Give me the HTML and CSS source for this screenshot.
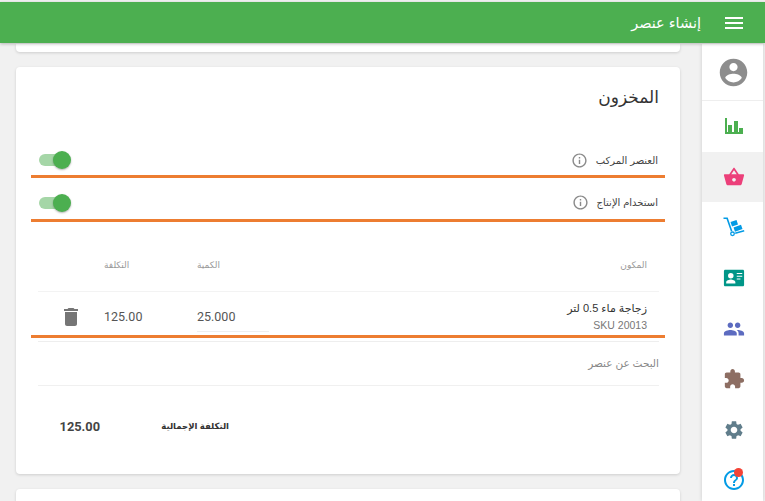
FILE: index.html
```html
<!DOCTYPE html>
<html lang="ar" dir="rtl">
<head>
    <meta charset="UTF-8">
    <meta name="viewport" content="width=device-width, initial-scale=1.0">
    <title>إنشاء عنصر</title>
    <link rel="stylesheet" href="styles.css">
</head>
<body>

<header class="topbar">
    <svg class="menu-icon" viewBox="0 0 24 24"><path d="M3 18h18v-2H3v2zm0-5h18v-2H3v2zm0-7v2h18V6H3z"/></svg>
    <span class="topbar-title">إنشاء عنصر</span>
</header>

<div class="layout">
    <nav class="sidebar">
        <a class="nav-avatar">
            <svg viewBox="0 0 24 24" fill="#8d8d8d"><path d="M12 2C6.48 2 2 6.48 2 12s4.48 10 10 10 10-4.48 10-10S17.52 2 12 2zm0 3c1.66 0 3 1.34 3 3s-1.34 3-3 3-3-1.34-3-3 1.34-3 3-3zm0 14.2c-2.5 0-4.71-1.28-6-3.22.03-1.99 4-3.08 6-3.08 1.99 0 5.97 1.09 6 3.08-1.29 1.94-3.5 3.22-6 3.22z"/></svg>
        </a>
        <a class="nav-item">
            <svg class="chart-icon" viewBox="0 0 18 16" fill="#4caf50"><path d="M0 0h2v14h16v2H0zM3 7h4v7H3zM9 3h4v11H9zM14 10h4v4h-4z"/></svg>
        </a>
        <a class="nav-item active">
            <svg viewBox="0 0 24 24" fill="#ec407a"><path d="M17.21 9l-4.38-6.56c-.19-.28-.51-.42-.83-.42-.32 0-.64.14-.83.43L6.79 9H2c-.55 0-1 .45-1 1 0 .09.01.18.04.27l2.54 9.27c.23.84 1 1.46 1.92 1.46h13c.92 0 1.69-.62 1.93-1.46l2.54-9.27L23 10c0-.55-.45-1-1-1h-4.790zM9 9l3-4.400L15 9H9zm3 8c-1.100 0-2-.9-2-2s.9-2 2-2 2 .9 2 2-.9 2-2 2z"/></svg>
        </a>
        <a class="nav-item">
            <svg viewBox="0 0 22 20" fill="#039be5"><path d="M.5.5h4.200l4.700 13.600-1.500.5L3.500 2H.5zM12 15.500l9-2.500.4 1.400-9 2.500zM7.500 5l6-2 1.500 4.500-6 2zM10.500 10.500l7.500-2.700 1.500 4.200-7.500 2.700z"/><circle cx="9.500" cy="16.800" r="1.800" fill="none" stroke="#039be5" stroke-width="1.300"/></svg>
        </a>
        <a class="nav-item">
            <svg viewBox="0 0 24 24" fill="#009688"><path d="M2.500 3h19c.9 0 1.500.6 1.500 1.500v15c0 .9-.6 1.500-1.500 1.500h-19c-.9 0-1.500-.6-1.500-1.500v-15C1 3.600 1.600 3 2.500 3zM8.500 6.500a3 3 0 1 0 0 6 3 3 0 0 0 0-6zM3.500 18h10v-1.500c0-2-3.300-3-5-3s-5 1-5 3zM15 6.500v1.200h6V6.500zM15 9.500v1.200h6V9.500zM15 12.500v1.200h4v-1.200z"/></svg>
        </a>
        <a class="nav-item">
            <svg viewBox="0 0 24 24" fill="#5c6bc0"><path d="M16 11c1.660 0 2.990-1.340 2.990-3S17.660 5 16 5c-1.660 0-3 1.340-3 3s1.340 3 3 3zm-8 0c1.660 0 2.990-1.340 2.990-3S9.660 5 8 5C6.340 5 5 6.340 5 8s1.340 3 3 3zm0 2c-2.330 0-7 1.170-7 3.500V19h14v-2.500c0-2.330-4.670-3.500-7-3.500zm8 0c-.29 0-.62.02-.97.05 1.160.84 1.970 1.970 1.970 3.450V19h6v-2.500c0-2.330-4.670-3.500-7-3.500z"/></svg>
        </a>
        <a class="nav-item">
            <svg viewBox="0 0 24 24" fill="#8d6e63"><path d="M20.500 11H19V7c0-1.100-.9-2-2-2h-4V3.500C13 2.120 11.880 1 10.500 1S8 2.120 8 3.500V5H4c-1.100 0-1.990.9-1.990 2v3.800H3.500c1.490 0 2.700 1.210 2.700 2.700s-1.210 2.700-2.700 2.700H2V20c0 1.100.9 2 2 2h3.800v-1.500c0-1.490 1.210-2.700 2.700-2.700 1.490 0 2.700 1.210 2.700 2.700V22H17c1.100 0 2-.9 2-2v-4h1.500c1.380 0 2.500-1.120 2.500-2.500S21.880 11 20.500 11z"/></svg>
        </a>
        <a class="nav-item">
            <svg viewBox="0 0 24 24" fill="#607d8b"><path d="M19.140 12.940c.04-.3.06-.61.06-.94 0-.32-.02-.64-.07-.94l2.030-1.580c.18-.14.23-.41.12-.61l-1.920-3.320c-.12-.22-.37-.29-.59-.22l-2.390.96c-.5-.38-1.030-.7-1.620-.94l-.36-2.540c-.04-.24-.24-.41-.48-.41h-3.840c-.24 0-.43.17-.47.41l-.36 2.540c-.59.24-1.130.57-1.620.94l-2.390-.96c-.22-.08-.47 0-.59.22L2.740 8.870c-.12.21-.08.47.12.61l2.030 1.580c-.05.3-.09.63-.09.94s.02.64.07.94l-2.030 1.580c-.18.14-.23.41-.12.61l1.920 3.320c.12.22.37.29.59.22l2.390-.96c.5.38 1.030.7 1.620.94l.36 2.540c.05.24.24.41.48.41h3.840c.24 0 .44-.17.47-.41l.36-2.540c.59-.24 1.130-.56 1.620-.94l2.390.96c.22.08.47 0 .59-.22l1.920-3.320c.12-.22.07-.47-.12-.61l-2.010-1.580zM12 15.600c-1.980 0-3.600-1.620-3.600-3.600s1.620-3.600 3.600-3.600 3.600 1.620 3.600 3.600-1.620 3.600-3.600 3.600z"/></svg>
        </a>
        <a class="nav-item nav-help">
            <svg viewBox="0 0 24 24" fill="#039be5"><path d="M11 18h2v-2h-2v2zm1-16C6.480 2 2 6.480 2 12s4.480 10 10 10 10-4.480 10-10S17.520 2 12 2zm0 18c-4.410 0-8-3.590-8-8s3.590-8 8-8 8 3.590 8 8-3.590 8-8 8zm0-14c-2.210 0-4 1.790-4 4h2c0-1.100.9-2 2-2s2 .9 2 2c0 2-3 1.750-3 5h2c0-2.250 3-2.500 3-5 0-2.210-1.790-4-4-4z"/></svg>
            <span class="help-dot"></span>
        </a>
    </nav>

    <main class="content">
        <div class="card card-prev"></div>

        <section class="card card-stock">
            <h2 class="card-title">المخزون</h2>

            <div class="switch-row switch-first">
                <span class="switch-label">العنصر المركب</span>
                <svg class="info-icon" viewBox="0 0 24 24"><path d="M11 7h2v2h-2zm0 4h2v6h-2zm1-9C6.480 2 2 6.480 2 12s4.480 10 10 10 10-4.480 10-10S17.520 2 12 2zm0 18c-4.410 0-8-3.590-8-8s3.590-8 8-8 8 3.590 8 8-3.590 8-8 8z"/></svg>
                <span class="toggle"></span>
            </div>
            <div class="switch-row">
                <span class="switch-label">استخدام الإنتاج</span>
                <svg class="info-icon" viewBox="0 0 24 24"><path d="M11 7h2v2h-2zm0 4h2v6h-2zm1-9C6.480 2 2 6.480 2 12s4.480 10 10 10 10-4.480 10-10S17.520 2 12 2zm0 18c-4.410 0-8-3.590-8-8s3.590-8 8-8 8 3.590 8 8-3.590 8-8 8z"/></svg>
                <span class="toggle"></span>
            </div>

            <div class="table-head">
                <span class="col-name">المكون</span>
                <span class="col-num">الكمية</span>
                <span class="col-num">التكلفة</span>
                <span class="col-action"></span>
            </div>

            <div class="table-row">
                <div class="col-name">
                    <div class="item-name">زجاجة ماء 0.5 لتر</div>
                    <div class="item-sku">SKU 20013</div>
                </div>
                <div class="col-num"><span class="qty-input">25.000</span></div>
                <div class="col-num cost-value">125.00</div>
                <div class="col-action">
                    <svg class="delete-icon" viewBox="0 0 24 24"><path d="M6 19c0 1.100.9 2 2 2h8c1.100 0 2-.9 2-2V7H6v12zM19 4h-3.500l-1-1h-5l-1 1H5v2h14V4z"/></svg>
                </div>
            </div>
            <div class="row-line"></div>

            <div class="search-row">البحث عن عنصر</div>

            <div class="total-row">
                <span class="total-label">التكلفة الإجمالية</span>
                <span class="total-value">125.00</span>
            </div>
        </section>

        <div class="card card-next"></div>
    </main>
</div>

</body>
</html>
```

FILE: styles.css
```css
html, body {
    height: 100%;
}
body {
    margin: 0;
    overflow: hidden;
    background: #f1f1f1;
    font-family: "Liberation Sans", "DejaVu Sans", sans-serif;
    color: #333;
}
.topbar {
    height: 41px;
    margin-top: 2px;
    margin-bottom: 1px;
    display: flex;
    align-items: center;
    padding: 0 19px 0 0;
    background: #4caf50;
    color: #fff;
    box-shadow: 0 1px 3px rgba(0, 0, 0, 0.25);
    position: relative;
}
.menu-icon {
    width: 24px;
    height: 24px;
    fill: #fff;
}
.topbar-title {
    margin-right: 21px;
    font-size: 14.5px;
}
.layout {
    display: flex;
    height: 457px;
    overflow: hidden;
}
.sidebar {
    width: 61px;
    margin-right: 2px;
    flex: none;
    background: #fff;
    box-shadow: 0 0 4px rgba(0, 0, 0, 0.15);
}
.sidebar a {
    display: flex;
    align-items: center;
    justify-content: center;
    padding-left: 2px;
    box-sizing: border-box;
}
.nav-avatar {
    height: 57px;
    border-bottom: 1px solid #eee;
}
.nav-avatar svg {
    width: 33px;
    height: 33px;
}
.nav-item {
    height: 50.6px;
}
.nav-item svg {
    width: 22px;
    height: 22px;
}
.nav-item .chart-icon {
    width: 18px;
    height: 16px;
}
.nav-item.active {
    background: #f1f1f1;
}
.nav-help {
    position: relative;
}
.nav-help svg {
    width: 24px;
    height: 24px;
}
.help-dot {
    position: absolute;
    top: 13px;
    left: 32px;
    width: 9px;
    height: 9px;
    border-radius: 50%;
    background: #f44336;
}
.content {
    flex: 1;
    overflow: hidden;
    padding-left: 16px;
    padding-right: 22px;
}
.card {
    background: #fff;
    border-radius: 4px;
    box-shadow: 0 1px 3px rgba(0, 0, 0, 0.15);
}
.card-prev {
    height: 8px;
    margin-bottom: 15px;
    border-radius: 0 0 4px 4px;
}
.card-stock {
    height: 407px;
    padding: 0 21px 0 22px;
    box-sizing: border-box;
    margin-bottom: 15px;
}
.card-next {
    height: 40px;
}
.card-title {
    margin: 0;
    padding-top: 20px;
    height: 58px;
    box-sizing: border-box;
    font-size: 17px;
    font-weight: normal;
    color: #333;
}
.switch-row {
    height: 44px;
    margin: 0 -6px 0 -7px;
    padding: 8px 7px 0 8px;
    display: flex;
    align-items: center;
    box-sizing: border-box;
    border-bottom: 3px solid #ed7d31;
    font-size: 10px;
    color: #444;
}
.switch-first {
    height: 53px;
    padding-top: 20px;
}
.switch-label {
    margin-left: 8px;
}
.info-icon {
    width: 17px;
    height: 17px;
    fill: #8a8a8a;
}
.toggle {
    margin-right: auto;
    width: 32px;
    height: 18px;
    position: relative;
}
.toggle::before {
    content: "";
    position: absolute;
    left: 0;
    top: 3px;
    width: 30px;
    height: 12px;
    border-radius: 6px;
    background: #a5d6a7;
}
.toggle::after {
    content: "";
    position: absolute;
    right: 0;
    top: 0;
    width: 18px;
    height: 18px;
    border-radius: 50%;
    background: #4caf50;
    box-shadow: 0 1px 2px rgba(0, 0, 0, 0.3);
}
.table-head {
    height: 70px;
    padding-top: 17px;
    box-sizing: border-box;
    display: flex;
    align-items: center;
    font-size: 9px;
    color: #999;
    border-bottom: 1px solid #f3f3f3;
}
.table-row {
    height: 46px;
    margin: 0 -6px 0 -7px;
    padding: 6px 6px 0 7px;
    display: flex;
    align-items: center;
    box-sizing: border-box;
    border-bottom: 3px solid #ed7d31;
}
.col-name {
    flex: 1;
    padding-right: 12px;
}
.col-num {
    width: 93px;
    flex: none;
    text-align: left;
}
.col-action {
    width: 66px;
    flex: none;
    display: flex;
    justify-content: center;
}
.item-name {
    font-size: 11px;
    color: #333;
}
.item-sku {
    font-size: 10.5px;
    color: #777;
    margin-top: 4px;
}
.qty-input {
    display: block;
    direction: ltr;
    width: 72px;
    height: 28px;
    line-height: 28px;
    margin-top: 1px;
    margin-right: auto;
    font-family: Roboto, sans-serif;
    font-size: 12.5px;
    color: #555;
    border-bottom: 1px solid #eee;
}
.cost-value {
    direction: ltr;
    font-family: Roboto, sans-serif;
    font-size: 12.5px;
    color: #555;
}
.delete-icon {
    width: 24px;
    height: 24px;
    fill: #757575;
}
.row-line {
    height: 0;
    margin-top: 3px;
    border-bottom: 1px solid #eee;
}
.search-row {
    height: 43px;
    line-height: 42px;
    font-size: 10.5px;
    color: #888;
    border-bottom: 1px solid #f0f0f0;
}
.total-row {
    display: flex;
    align-items: center;
    height: 80px;
}
.total-label {
    margin-right: 430px;
    width: 66px;
    flex: none;
    white-space: nowrap;
    font-size: 8.5px;
    font-weight: bold;
    color: #333;
}
.total-value {
    margin-right: 63px;
    font-family: Roboto, sans-serif;
    font-size: 12.8px;
    font-weight: bold;
    color: #444;
}
```
